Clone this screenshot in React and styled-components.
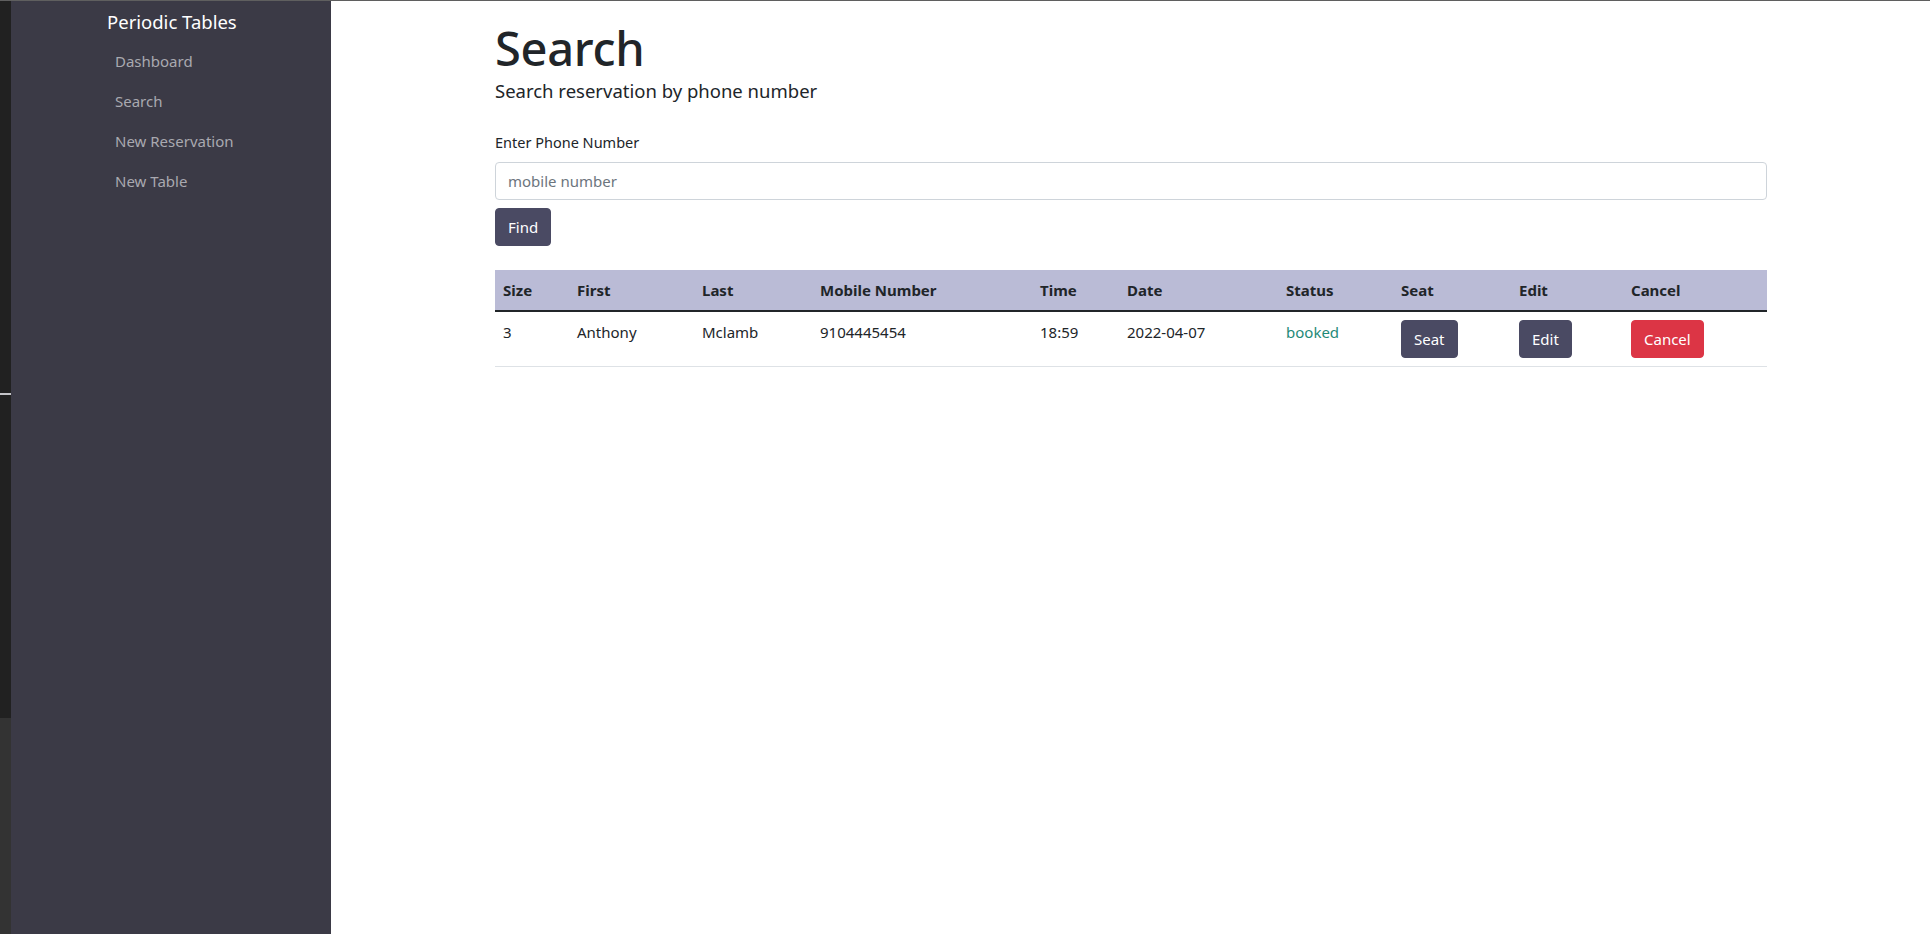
import React, { useState } from 'react';
import styled, { createGlobalStyle } from 'styled-components';

const GlobalStyle = createGlobalStyle`
    html, body {
        margin: 0;
        padding: 0;
        background: #ffffff;
        font-family: "Noto Sans", "Open Sans", sans-serif;
        color: #212529;
    }
    * {
        box-sizing: border-box;
    }
`;

const reservations = [
    {
        people: 3,
        first_name: 'Anthony',
        last_name: 'Mclamb',
        mobile_number: '9104445454',
        reservation_time: '18:59',
        reservation_date: '2022-04-07',
        status: 'booked',
    },
];

const columns = [
    { label: 'Size', width: 74 },
    { label: 'First', width: 125 },
    { label: 'Last', width: 118 },
    { label: 'Mobile Number', width: 220 },
    { label: 'Time', width: 87 },
    { label: 'Date', width: 159 },
    { label: 'Status', width: 115 },
    { label: 'Seat', width: 118 },
    { label: 'Edit', width: 112 },
    { label: 'Cancel', width: 144 },
];

const App = () => {
    const [phone, setPhone] = useState('');

    return (
        <>
            <GlobalStyle />
            <Page>
                <EdgeStrip>
                    <EdgeTop />
                    <EdgeMark />
                    <EdgeMiddle />
                    <EdgeBottom />
                </EdgeStrip>
                <Sidebar>
                    <Brand>Periodic Tables</Brand>
                    <NavList>
                        <NavItem>Dashboard</NavItem>
                        <NavItem>Search</NavItem>
                        <NavItem>New Reservation</NavItem>
                        <NavItem>New Table</NavItem>
                    </NavList>
                </Sidebar>
                <Main>
                    <Title>Search</Title>
                    <Subtitle>Search reservation by phone number</Subtitle>
                    <Form onSubmit={(e) => e.preventDefault()}>
                        <Label htmlFor="mobile_number">Enter Phone Number</Label>
                        <Input
                            id="mobile_number"
                            type="text"
                            placeholder="mobile number"
                            value={phone}
                            onChange={(e) => setPhone(e.target.value)}
                        />
                        <Button type="submit">Find</Button>
                    </Form>
                    <Table>
                        <colgroup>
                            {columns.map((c) => (
                                <col key={c.label} style={{ width: c.width }} />
                            ))}
                        </colgroup>
                        <thead>
                            <tr>
                                {columns.map((c) => (
                                    <Th key={c.label}>{c.label}</Th>
                                ))}
                            </tr>
                        </thead>
                        <tbody>
                            {reservations.map((r) => (
                                <tr key={r.mobile_number}>
                                    <Td>{r.people}</Td>
                                    <Td>{r.first_name}</Td>
                                    <Td>{r.last_name}</Td>
                                    <Td>{r.mobile_number}</Td>
                                    <Td>{r.reservation_time}</Td>
                                    <Td>{r.reservation_date}</Td>
                                    <Td><Status>{r.status}</Status></Td>
                                    <Td><Button type="button">Seat</Button></Td>
                                    <Td><Button type="button">Edit</Button></Td>
                                    <Td><Button type="button" $variant="danger">Cancel</Button></Td>
                                </tr>
                            ))}
                        </tbody>
                    </Table>
                </Main>
            </Page>
        </>
    );
};

export default App;

const Page = styled.div`
    display: flex;
    height: 100vh;
    border-top: 1px solid #5f5f5f;
`;

const EdgeStrip = styled.div`
    display: flex;
    flex-direction: column;
    width: 11px;
    flex-shrink: 0;
`;

const EdgeTop = styled.div`
    height: 392px;
    background: #212121;
`;

const EdgeMark = styled.div`
    height: 2px;
    background: #c4c4c8;
`;

const EdgeMiddle = styled.div`
    height: 323px;
    background: #212121;
`;

const EdgeBottom = styled.div`
    flex: 1;
    background: #333333;
`;

const Sidebar = styled.nav`
    width: 320px;
    flex-shrink: 0;
    background: #3b3a46;
    padding-top: 6px;
`;

const Brand = styled.div`
    color: #ffffff;
    font-size: 18.5px;
    line-height: 30px;
    padding-left: 96px;
`;

const NavList = styled.div`
    display: flex;
    flex-direction: column;
    padding-left: 104px;
    padding-top: 4px;
`;

const NavItem = styled.a`
    color: #a9a9b0;
    font-size: 15px;
    line-height: 40px;
    cursor: pointer;
`;

const Main = styled.main`
    flex: 1;
    padding: 17px 163px 0 164px;
`;

const Title = styled.h1`
    margin: 0;
    font-size: 47px;
    font-weight: 500;
    line-height: 60px;
    letter-spacing: -0.3px;
`;

const Subtitle = styled.h4`
    margin: 0;
    font-size: 18.5px;
    font-weight: 400;
    line-height: 24px;
    margin-top: 1px;
`;

const Form = styled.form`
    display: flex;
    flex-direction: column;
    align-items: flex-start;
    margin-top: 27px;
`;

const Label = styled.label`
    font-size: 14.5px;
    line-height: 24px;
    margin-bottom: 8px;
`;

const Input = styled.input`
    width: 100%;
    height: 38px;
    padding: 6px 12px;
    font-family: inherit;
    font-size: 15px;
    color: #212529;
    border: 1px solid #ced4da;
    border-radius: 4px;
    outline: none;

    &::placeholder {
        color: #6c757d;
    }
`;

const Button = styled.button`
    height: 38px;
    padding: 0 12px;
    font-family: inherit;
    font-size: 15px;
    color: #ffffff;
    background: ${({ $variant }) => ($variant === 'danger' ? '#dc3545' : '#4a4a63')};
    border: 1px solid ${({ $variant }) => ($variant === 'danger' ? '#dc3545' : '#4a4a63')};
    border-radius: 4px;
    cursor: pointer;

    ${Form} & {
        margin-top: 8px;
    }
`;

const Table = styled.table`
    width: 100%;
    margin-top: 24px;
    border-collapse: collapse;
    table-layout: fixed;
    font-size: 15px;
`;

const Th = styled.th`
    text-align: left;
    font-weight: 700;
    padding: 8px;
    line-height: 24px;
    background: #babbd6;
    border-bottom: 2px solid #212529;
`;

const Td = styled.td`
    padding: 8px;
    line-height: 24px;
    vertical-align: top;
    border-bottom: 1px solid #dee2e6;
`;

const Status = styled.span`
    color: #1f8a78;
`;
